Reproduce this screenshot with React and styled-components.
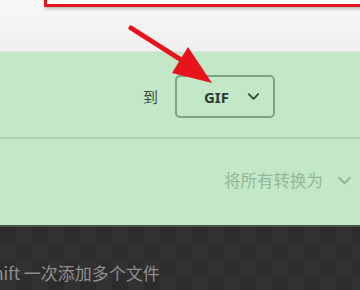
import styled, { createGlobalStyle } from "styled-components";

const GlobalStyle = createGlobalStyle`
    html, body {
        margin: 0;
        padding: 0;
        background: #2f2e2f;
    }
    body {
        font-family: "Noto Sans", "Noto Sans CJK SC", sans-serif;
    }
`
const Page = styled.div`
    position: relative;
    width: 360px;
    height: 290px;
    overflow: hidden;
`
const TopBar = styled.div`
    height: 52px;
    background: linear-gradient(#f8f8f8, #efefef);
    border-bottom: 1px solid #e2e6e2;
    box-sizing: border-box;
`
const HighlightBox = styled.div`
    position: absolute;
    left: 44px;
    top: -12px;
    right: -12px;
    height: 13px;
    background: #ffffff;
    border: 3px solid #e3161c;
    box-shadow: 1px 2px 3px rgba(0, 0, 0, 0.25);
`
const Arrow = styled.svg`
    position: absolute;
    left: 0;
    top: 0;
    pointer-events: none;
`
const GreenRow = styled.div`
    display: flex;
    justify-content: flex-end;
    align-items: ${p => p.$top ? "flex-start" : "center"};
    height: ${p => p.$height}px;
    box-sizing: border-box;
    padding: ${p => p.$top ? "29px 7px 0 0" : "0 85px 0 0"};
    background: #c3e8c8;
`
const Divider = styled.div`
    height: 2px;
    background: #afd3b4;
    box-shadow: 0 1px 1px rgba(150, 190, 155, 0.5);
`
const Label = styled.span`
    font-family: "Noto Sans CJK SC", sans-serif;
    font-size: 15px;
    color: #3c4a3e;
    margin-right: 17px;
    margin-top: 4px;
`
const Select = styled.div`
    display: flex;
    align-items: center;
    justify-content: space-between;
    width: 100px;
    height: 43px;
    box-sizing: border-box;
    padding: 0 12px 0 27px;
    border: 2px solid #7fa285;
    border-radius: 5px;
    margin-top: 3px;
`
const SelectValue = styled.span`
    font-family: "Noto Sans", sans-serif;
    font-weight: 700;
    font-size: 15px;
    color: #2f3a31;
    margin-top: 2px;
`
const ConvertAll = styled.div`
    display: flex;
    align-items: center;
    gap: 13px;
    font-family: "Noto Sans CJK SC", sans-serif;
    font-size: 16.5px;
    color: #95b69a;
`
const DropZone = styled.div`
    display: flex;
    align-items: flex-end;
    height: 65px;
    box-sizing: border-box;
    padding-bottom: 5px;
    border-top: 2px solid #485548;
    background-color: #2f2e2f;
    background-image: conic-gradient(#333233 25%, #2d2c2d 0 50%, #333233 0 75%, #2d2c2d 0);
    background-size: 32px 32px;
    overflow: hidden;
`
const Hint = styled.span`
    font-family: "Noto Sans CJK SC", sans-serif;
    font-size: 17px;
    color: #8e8e8e;
    margin-left: -17px;
    white-space: nowrap;
`

function Chevron({ color, size }) {
    return (
        <svg width={size} height={size} viewBox="0 0 16 16">
            <path d="M3 5.5l5 5 5-5" fill="none" stroke={color} strokeWidth="2" strokeLinecap="round" strokeLinejoin="round" />
        </svg>
    )
}

export default function App() {
    return (
        <Page>
            <GlobalStyle />
            <TopBar />
            <GreenRow $height={85}>
                <Label>到</Label>
                <Select>
                    <SelectValue>GIF</SelectValue>
                    <Chevron color="#3a463c" size={15} />
                </Select>
            </GreenRow>
            <Divider />
            <GreenRow $height={86} $top>
                <ConvertAll>
                    将所有转换为
                    <Chevron color="#95b69a" size={17} />
                </ConvertAll>
            </GreenRow>
            <DropZone>
                <Hint>Shift 一次添加多个文件</Hint>
            </DropZone>

            <HighlightBox />
            <Arrow width="360" height="290">
                <line x1="131" y1="28" x2="186" y2="63" stroke="#e8141c" strokeWidth="5" strokeLinecap="round" />
                <polygon points="188,47 212,83 172,73" fill="#e8141c" />
            </Arrow>
        </Page>
    )
}
